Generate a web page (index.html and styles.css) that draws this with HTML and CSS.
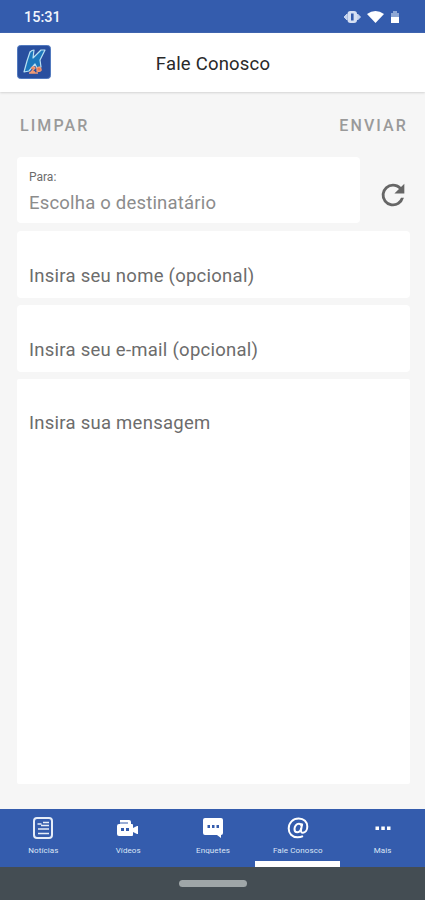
FILE: index.html
```html
<!DOCTYPE html>
<html lang="pt-BR">
<head>
<meta charset="utf-8">
<title>Fale Conosco</title>
<link rel="stylesheet" href="styles.css">
</head>
<body>
<div class="status">
  <span class="time">15:31</span>
  <svg class="status-icons" width="60" height="16" viewBox="0 0 60 16">
    <path d="M1 8l3-3v6zM17.500 8l-3-3v6z" fill="#c5d3ee" stroke="#c5d3ee"/>
    <rect x="4.500" y="2" width="9.500" height="12" rx="3" fill="#d6e0f3"/>
    <rect x="8" y="4.500" width="2.600" height="7" fill="#345cad"/>
    <path d="M24 5q8.500-6 17 0l-8.500 9z" fill="#fff"/>
    <path d="M48 4h2V2h4v2h2v5h-8z" fill="#8fa8d5"/>
    <path d="M48 8h8v6h-8z" fill="#fff"/>
  </svg>
</div>
<header class="header">
  <svg class="logo" width="34" height="34" viewBox="0 0 34 34">
    <rect x=".5" y=".5" width="33" height="33" rx="3" fill="#294f9f" stroke="#527abf"/>
    <path d="M13 7q2-2 4-2l-1 8 8-8h4l-5 10 1 7-4 1-2-4-6 7-5 1 3-11z" fill="#1c78bd" stroke="#b9e0f2" stroke-width="1.200" stroke-linejoin="round"/>
    <path d="M14 23q3-2 4 0l-4 4h4M20 23q3-2 4 1t-4 2zM12 28h9" fill="#e9784e" stroke="#f09b76" stroke-width="1.300"/>
  </svg>
  <h1 class="title">Fale Conosco</h1>
</header>
<main class="content">
  <div class="actions"><span class="clear">LIMPAR</span><span class="send">ENVIAR</span></div>
  <div class="recipient">
    <div class="field select"><span class="label">Para:</span><span class="value">Escolha o destinatário</span></div>
    <svg class="refresh" width="34" height="34" viewBox="0 0 24 24"><path d="M17.650 6.350A7.958 7.958 0 0 0 12 4a8 8 0 1 0 7.730 10h-2.080A6 6 0 1 1 12 6c1.660 0 3.140.69 4.220 1.780L13 11h7V4z" fill="#666"/></svg>
  </div>
  <div class="field name">Insira seu nome (opcional)</div>
  <div class="field email">Insira seu e-mail (opcional)</div>
  <div class="field message">Insira sua mensagem</div>
</main>
<nav class="tabs">
  <div class="tab">
    <svg width="24" height="24" viewBox="0 0 24 24" fill="none" stroke="#e6edf8"><rect x="3" y="2" width="18" height="20" rx="3" stroke-width="2"/><path d="M6.500 8h4M12 6.500h6M10 9.500h8M7 13h11M7 17.500h11" stroke-width="1.500"/></svg>
    <span class="tab-label">Notícias</span>
  </div>
  <div class="tab">
    <svg width="24" height="24" viewBox="0 0 24 24"><path d="M4 4h9q2 0 2 2v2h1q1 0 1 1v3l4-2h1v8h-1l-4-2v3q0 1-1 1H3q-2 0-2-2v-8q0-2 2-2h1z" fill="#fff"/><path d="M5 12h3v3H5zM10 12h3v3h-3z" fill="#345cad"/><path d="M4 7h8" stroke="#345cad"/></svg>
    <span class="tab-label">Vídeos</span>
  </div>
  <div class="tab">
    <svg width="24" height="24" viewBox="0 0 24 24"><path d="M4 2h16q2 0 2 2v13q0 2-2 2v3l-4-3H4q-2 0-2-2V4q0-2 2-2z" fill="#fff"/><path d="M6.500 9h2.500v3H6.500zM11 9h2.500v3H11zM15.500 9H18v3h-2.500z" fill="#345cad"/></svg>
    <span class="tab-label">Enquetes</span>
  </div>
  <div class="tab active">
    <svg width="24" height="24" viewBox="0 0 24 24" fill="none" stroke="#fff" stroke-width="2"><path d="M17 20.200Q14.500 21.300 11.500 21.300C6 21.300 2.700 17.500 2.700 12.500 2.700 6.700 7 2.600 12.700 2.600c5.200 0 8.600 3.300 8.600 8 0 3.600-1.900 6.100-4.300 6.100-1.700 0-2.300-1.100-2-2.700L16.200 7.500"/><path d="M15.700 10.200C15.400 8.500 14.400 7.700 12.900 7.700c-2.500 0-4.400 2.500-4.400 5.200 0 2 1 3.400 2.700 3.400 2 0 3.500-1.700 4-4"/></svg>
    <span class="tab-label">Fale Conosco</span>
  </div>
  <div class="tab">
    <svg width="24" height="24" viewBox="0 0 24 24"><path d="M4.500 10.500H8V14H4.500zM10.300 10.500h3.500V14h-3.500zM16 10.500h3.500V14H16z" fill="#fff"/></svg>
    <span class="tab-label">Mais</span>
  </div>
</nav>
<div class="system"><div class="handle"></div></div>
</body>
</html>
```
FILE: styles.css
```css
* { box-sizing: border-box; }
body {
  margin: 0;
  height: 900px;
  display: flex;
  flex-direction: column;
  overflow: hidden;
  background: #f6f6f6;
  font-family: Roboto, sans-serif;
}
svg { display: block; flex: none; }
.status {
  height: 33px;
  flex: none;
  display: flex;
  align-items: center;
  justify-content: space-between;
  padding: 1px 22px 0 24px;
  background: #345cad;
  color: #f2f6fd;
}
.time { font-size: 14.5px; font-weight: 500; }
.header {
  height: 59px;
  flex: none;
  display: grid;
  grid-template-columns: 34px 1fr 34px;
  align-items: center;
  padding: 0 16px 0 17px;
  background: #fff;
  box-shadow: 0 1px 2px #d4d4d4;
}
.logo { margin-top: -1px; }
.title {
  margin: 2px 0 0;
  text-align: center;
  font-size: 18.5px;
  line-height: 24px;
  font-weight: 400;
  letter-spacing: .2px;
  color: #292929;
}
.content {
  flex: 1;
  padding: 0 15px 25px 17px;
  display: flex;
  flex-direction: column;
}
.actions {
  height: 65px;
  flex: none;
  display: flex;
  justify-content: space-between;
  align-items: center;
  padding: 1px 1px 0 3px;
  color: #9a9a9a;
  font-size: 16px;
  font-weight: 500;
  letter-spacing: 2.1px;
}
.send { margin-right: 1px; }
.recipient { display: flex; align-items: center; }
.refresh { margin: 9px 0 0 16px; }
.field {
  flex: none;
  height: 67px;
  padding: 33px 12px 0;
  border-radius: 4px;
  background: #fff;
  color: #6c6c6c;
  font-size: 18.5px;
  line-height: 24px;
  letter-spacing: .26px;
}
.select { width: 343px; height: 66px; padding-top: 12px; display: flex; flex-direction: column; }
.label { font-size: 12px; line-height: 16px; letter-spacing: 0; }
.value { margin-top: 6px; color: #8c8c8c; letter-spacing: .2px; }
.name { margin-top: 8px; }
.email { margin-top: 7px; }
.message { margin-top: 7px; flex: 1; padding-top: 32px; border-radius: 2px; }
.tabs {
  height: 58px;
  flex: none;
  display: grid;
  grid-template-columns: repeat(5, 1fr);
  padding-left: 1px;
  background: #345cad;
}
.tab {
  display: flex;
  flex-direction: column;
  align-items: center;
  padding-top: 7px;
  border-bottom: 6px solid transparent;
  color: #dce6f6;
}
.tab-label { margin-top: 6px; font-size: 8px; line-height: 10px; font-weight: 400; letter-spacing: .1px; white-space: nowrap; }
.active { border-bottom-color: #fff; }
.system {
  height: 33px;
  flex: none;
  display: flex;
  justify-content: center;
  align-items: center;
  background: #444d53;
}
.handle { width: 68px; height: 7px; border-radius: 4px; background: #9fa6a8; }
```
